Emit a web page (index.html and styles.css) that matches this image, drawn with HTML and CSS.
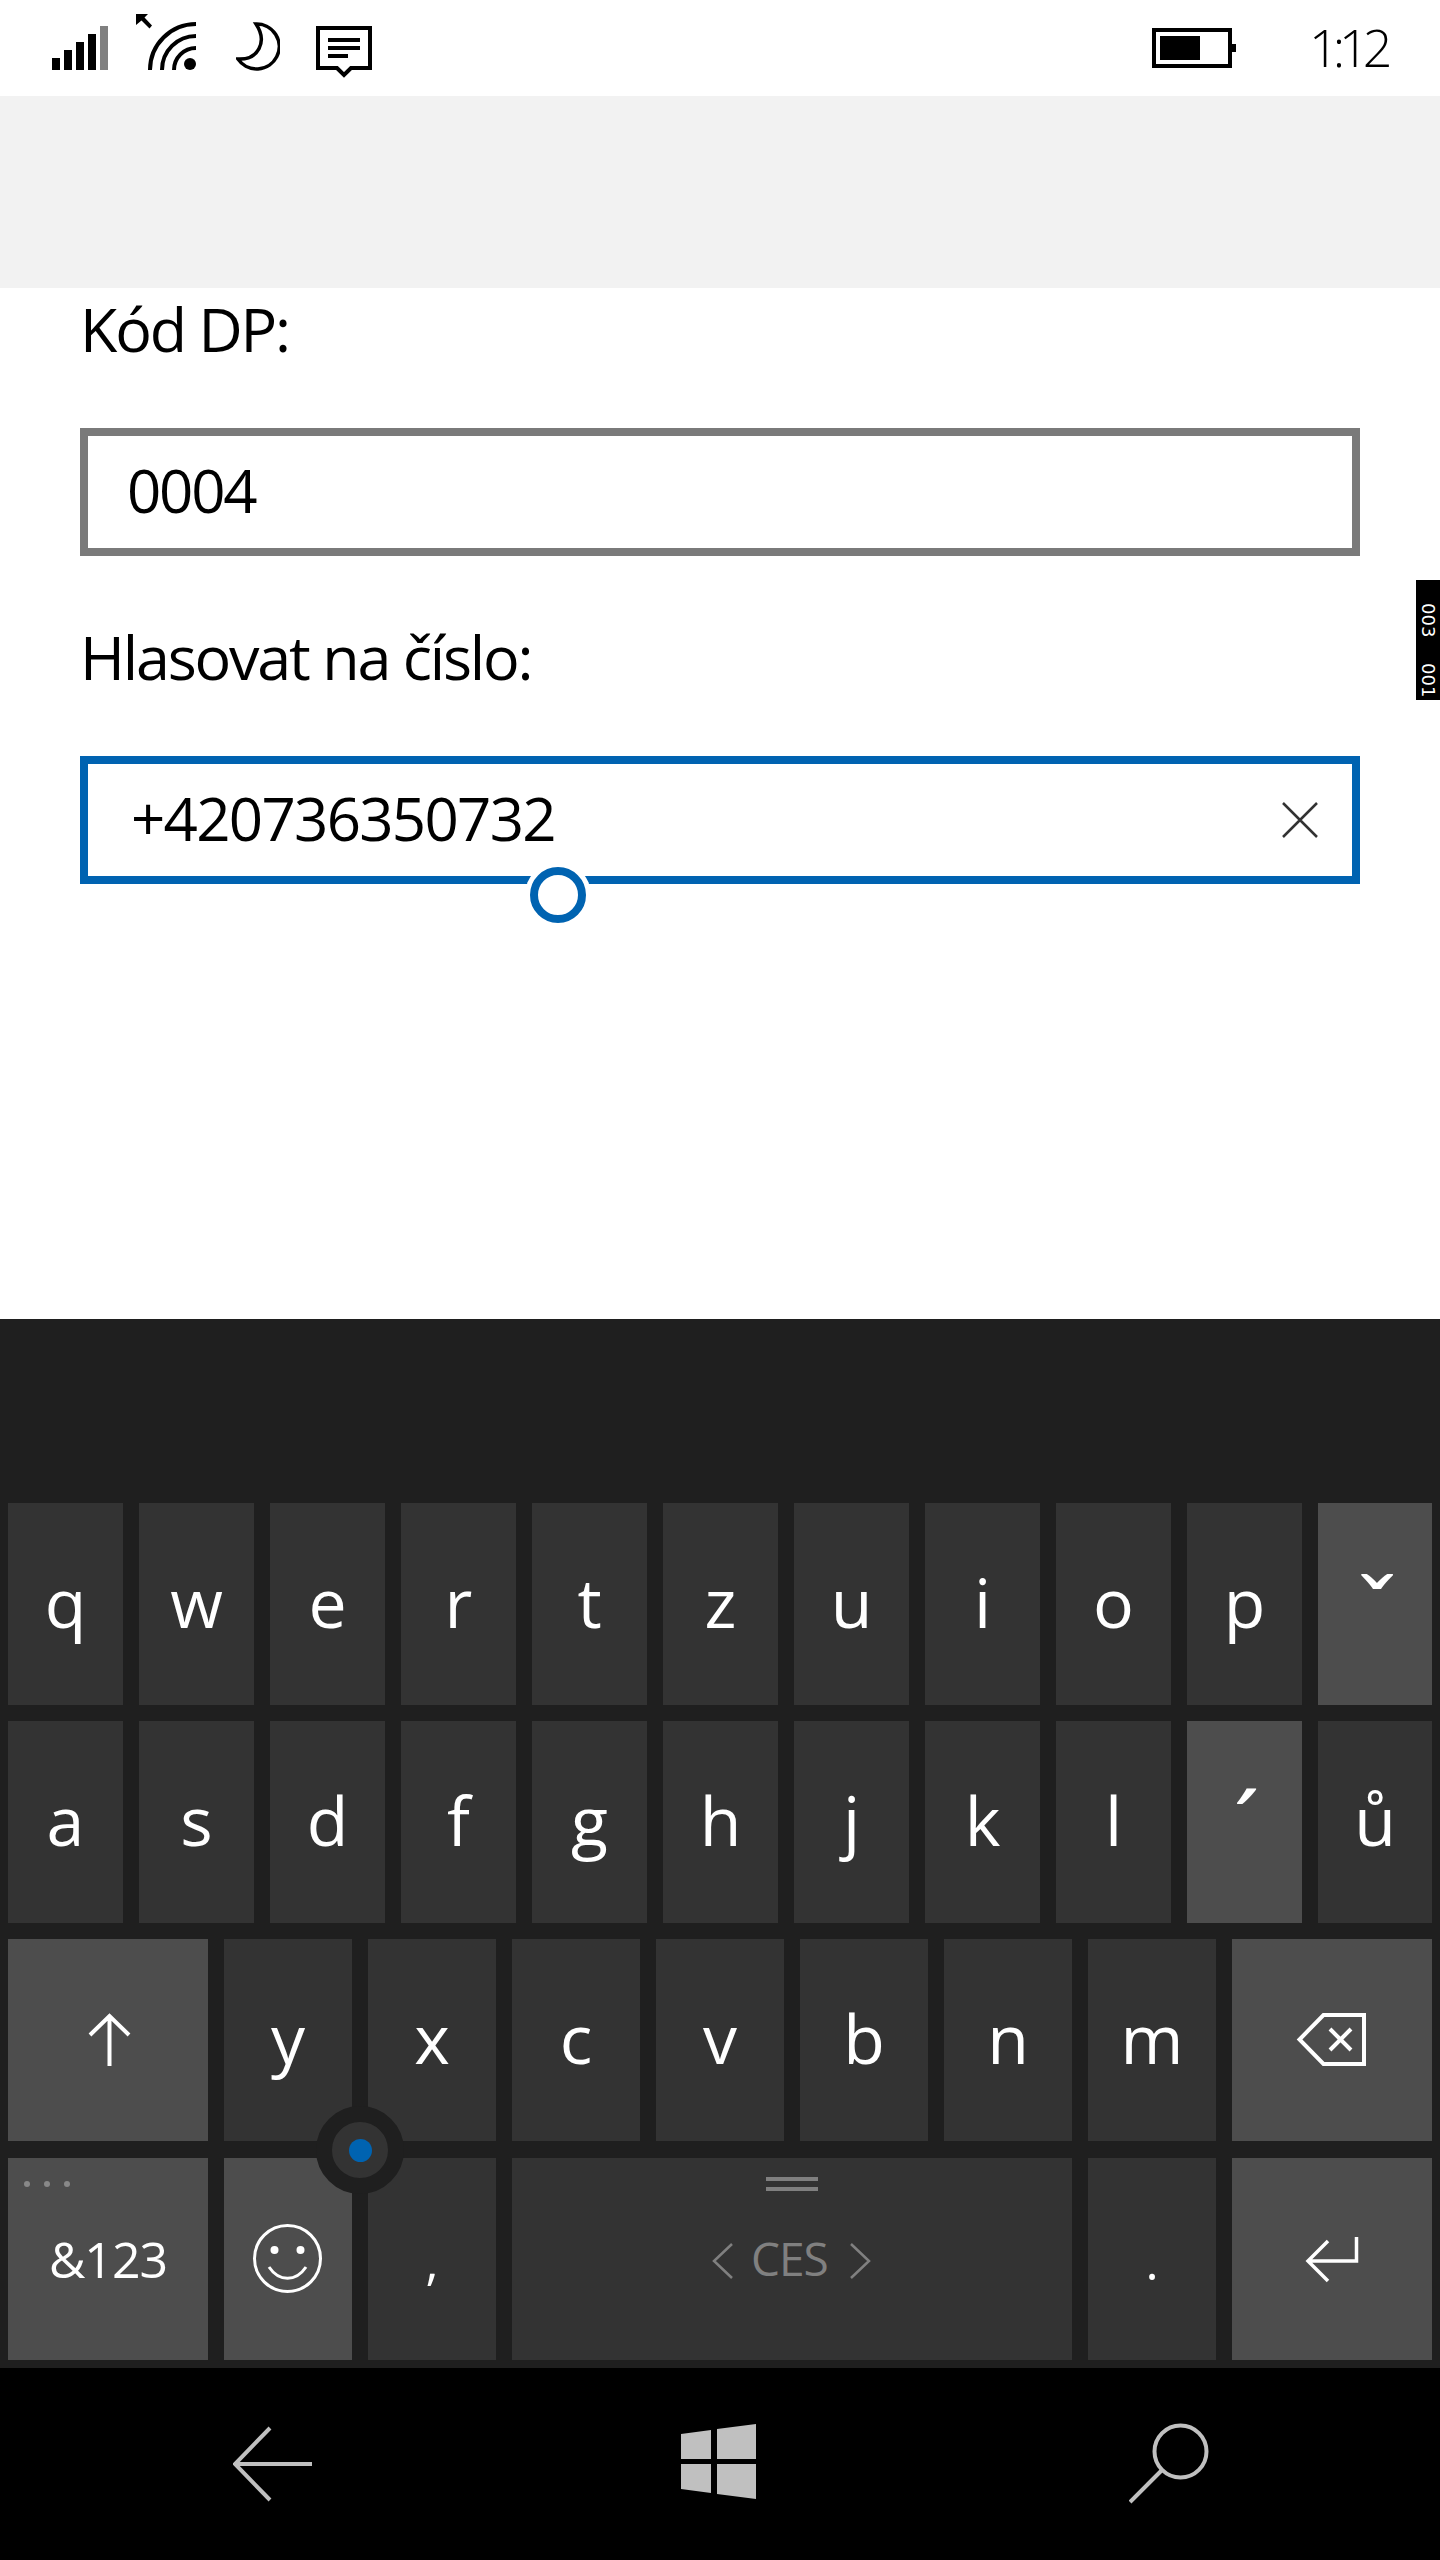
FILE: index.html
```html
<!DOCTYPE html>
<html lang="cs">
<head>
    <meta charset="UTF-8">
    <meta name="viewport" content="width=device-width, initial-scale=1.0">
    <title>Hlasovat</title>
    <link rel="stylesheet" href="styles.css">
</head>
<body>
    <!-- Status bar -->
    <header class="status-bar">
        <svg class="status-icon" width="56" height="96" viewBox="52 0 56 96">
            <rect x="52" y="58" width="8" height="12"/>
            <rect x="64" y="50" width="8" height="20"/>
            <rect x="76" y="42" width="8" height="28"/>
            <rect x="88" y="34" width="8" height="36"/>
            <rect x="100" y="26" width="8" height="44" fill="#808080"/>
        </svg>
        <svg class="status-icon gap-wifi" width="60" height="96" viewBox="136 0 60 96">
            <path d="M136 14H148L144.500 17.500L152 25.500L149.500 28.500L141.500 20.500L136 25Z"/>
            <circle cx="190" cy="64" r="6"/>
            <g fill="none" stroke="#000" stroke-width="4">
                <path d="M174 70A22 22 0 0 1 196 48"/>
                <path d="M162 70A34 34 0 0 1 196 36"/>
                <path d="M150 70A46 46 0 0 1 196 24"/>
            </g>
        </svg>
        <svg class="status-icon gap-moon" width="44" height="96" viewBox="236 0 44 96">
            <path d="M256 24A22.500 22.500 0 1 1 238 59C258 60 268 42 256 24Z" fill="none" stroke="#000" stroke-width="3.500"/>
        </svg>
        <svg class="status-icon gap-msg" width="56" height="96" viewBox="316 0 56 96">
            <path d="M318 28H370V68H351L344 75L337 68H318Z" fill="none" stroke="#000" stroke-width="4"/>
            <rect x="328" y="38" width="32" height="4"/>
            <rect x="328" y="46" width="32" height="4"/>
            <rect x="328" y="54" width="20" height="4"/>
        </svg>
        <svg class="status-icon battery" width="84" height="96" viewBox="1152 0 84 96">
            <rect x="1154" y="30" width="76" height="36" fill="none" stroke="#000" stroke-width="4"/>
            <rect x="1160" y="36" width="40" height="24"/>
            <rect x="1232" y="44" width="4" height="8"/>
        </svg>
        <span class="clock">1:12</span>
    </header>

    <div class="app-bar"></div>

    <main class="form">
        <label class="field-label">Kód DP:</label>
        <div class="field">0004</div>
        <label class="field-label">Hlasovat na číslo:</label>
        <div class="field field-focus">
            +420736350732
            <svg class="clear-btn" width="36" height="36" viewBox="0 0 36 36">
                <path d="M1 1L35 35M35 1L1 35" stroke="#333" stroke-width="2.500" fill="none"/>
            </svg>
            <span class="caret-handle"></span>
        </div>
    </main>

    <!-- Keyboard -->
    <section class="keyboard">
        <div class="key-row row-letters">
            <div class="key">q</div>
            <div class="key">w</div>
            <div class="key">e</div>
            <div class="key">r</div>
            <div class="key">t</div>
            <div class="key">z</div>
            <div class="key">u</div>
            <div class="key">i</div>
            <div class="key">o</div>
            <div class="key">p</div>
            <div class="key key-fn key-caron">ˇ</div>
        </div>
        <div class="key-row row-letters">
            <div class="key">a</div>
            <div class="key">s</div>
            <div class="key">d</div>
            <div class="key">f</div>
            <div class="key">g</div>
            <div class="key">h</div>
            <div class="key">j</div>
            <div class="key">k</div>
            <div class="key">l</div>
            <div class="key key-fn key-acute">´</div>
            <div class="key">ů</div>
        </div>
        <div class="key-row row-wide">
            <div class="key key-fn">
                <svg viewBox="8 1939 200 202">
                    <path d="M109.500 2066V2016M90 2035L109.500 2016L129 2035" fill="none" stroke="#fff" stroke-width="4"/>
                </svg>
            </div>
            <div class="key">y</div>
            <div class="key">x</div>
            <div class="key">c</div>
            <div class="key">v</div>
            <div class="key">b</div>
            <div class="key">n</div>
            <div class="key">m</div>
            <div class="key key-fn">
                <svg viewBox="1232 1939 200 202">
                    <path d="M1364 2015V2064H1323.500L1299.500 2039.500L1323.500 2015Z" fill="none" stroke="#fff" stroke-width="4"/>
                    <path d="M1330 2029L1351 2050M1351 2029L1330 2050" fill="none" stroke="#fff" stroke-width="4"/>
                </svg>
            </div>
        </div>
        <div class="key-row row-wide row-last">
            <div class="key key-fn key-sym">
                <span class="more-dots"><i></i><i></i><i></i></span>
                &amp;123
            </div>
            <div class="key key-fn">
                <svg viewBox="224 2158 128 202">
                    <circle cx="287.500" cy="2258.500" r="33" fill="none" stroke="#fff" stroke-width="3"/>
                    <circle cx="274.500" cy="2250" r="4" fill="#fff"/>
                    <circle cx="300.500" cy="2250" r="4" fill="#fff"/>
                    <path d="M269 2267C279 2282 296 2282 306 2267" fill="none" stroke="#fff" stroke-width="3"/>
                </svg>
            </div>
            <div class="key key-punct">,</div>
            <div class="key key-space">
                <svg viewBox="512 2158 560 202">
                    <rect x="766" y="2177" width="52" height="4" fill="#808080"/>
                    <rect x="766" y="2187" width="52" height="4" fill="#808080"/>
                    <path d="M732 2244L714 2261L732 2278M851 2244L869 2261L851 2278" fill="none" stroke="#808080" stroke-width="2.500"/>
                </svg>
                <span class="lang">CES</span>
            </div>
            <div class="key key-punct">.</div>
            <div class="key key-fn">
                <svg viewBox="1232 2158 200 202">
                    <path d="M1356.500 2237V2261H1308M1328 2241L1308 2261L1328 2281" fill="none" stroke="#fff" stroke-width="3.500"/>
                </svg>
            </div>
        </div>
        <div class="split-handle"><span></span></div>
    </section>

    <!-- Navigation bar -->
    <footer class="nav-bar">
        <svg width="80" height="192" viewBox="233 2368 80 192">
            <path d="M270 2428L235 2464L270 2500M235 2464H312" fill="none" stroke="#c0c0c0" stroke-width="4"/>
        </svg>
        <svg class="nav-start" width="75" height="192" viewBox="680 2368 75 192">
            <path d="M680 2434L710 2430V2459H680ZM716 2429L755 2424V2459H716ZM680 2464H710V2493L680 2489ZM716 2464H755V2499L716 2494Z" fill="#c0c0c0"/>
        </svg>
        <svg width="80" height="192" viewBox="1129 2368 80 192">
            <circle cx="1180.500" cy="2451.500" r="26" fill="none" stroke="#c0c0c0" stroke-width="4"/>
            <path d="M1162 2470L1130 2502" fill="none" stroke="#c0c0c0" stroke-width="4"/>
        </svg>
    </footer>

    <div class="debug-tag"><span>003</span><span>001</span></div>
</body>
</html>
```

FILE: styles.css
```css
* {
    box-sizing: border-box;
}
body {
    position: relative;
    margin: 0;
    width: 1440px;
    height: 2560px;
    overflow: hidden;
    font-family: "Open Sans", "Noto Sans", sans-serif;
    background-color: #fff;
    color: #000;
}
.status-bar {
    display: flex;
    height: 96px;
    padding-left: 52px;
}
.status-icon {
    display: block;
}
.gap-wifi {
    margin-left: 28px;
}
.gap-moon {
    margin-left: 40px;
}
.gap-msg {
    margin-left: 36px;
}
.battery {
    margin-left: 780px;
}
.clock {
    margin-left: 73px;
    font-size: 52px;
    font-weight: 300;
    line-height: 94px;
    letter-spacing: -6px;
}
.app-bar {
    height: 192px;
    background-color: #f2f2f2;
}
.form {
    height: 1031px;
    padding: 0 80px;
}
.field-label {
    display: block;
    font-size: 61px;
    line-height: 82px;
    letter-spacing: -2.200px;
    margin-bottom: 58px;
}
.field {
    position: relative;
    display: flex;
    align-items: center;
    justify-content: space-between;
    height: 128px;
    padding: 0 34px 4px 39px;
    margin-bottom: 60px;
    border: 8px solid #7a7a7a;
    font-size: 60px;
    letter-spacing: -2.200px;
}
.field-focus {
    border-color: #0063b1;
    padding-left: 43px;
    letter-spacing: -1.700px;
}
.clear-btn {
    display: block;
    margin-top: 4px;
}
.caret-handle {
    position: absolute;
    left: 442px;
    top: 103px;
    width: 56px;
    height: 56px;
    border: 8px solid #0063b1;
    border-radius: 50%;
    background-color: #fff;
    box-shadow: 0 0 0 5px #fff;
}
.keyboard {
    position: relative;
    height: 1049px;
    padding: 184px 8px 8px;
    background-color: #1f1f1f;
}
.key-row {
    display: grid;
    gap: 16px;
    height: 202px;
    margin-bottom: 16px;
}
.row-letters {
    grid-template-columns: repeat(10, 115px) 1fr;
}
.row-wide {
    grid-template-columns: 200px repeat(7, 1fr) 200px;
}
.row-last {
    margin-top: 17px;
    margin-bottom: 0;
}
.key {
    position: relative;
    display: flex;
    align-items: center;
    justify-content: center;
    padding-bottom: 6px;
    background-color: #333;
    color: #fff;
    font-size: 68px;
}
.key svg {
    position: absolute;
    left: 0;
    top: 0;
    display: block;
    width: 100%;
    height: 100%;
}
.key-fn {
    background-color: #4d4d4d;
}
.key-caron {
    padding: 12px 0 0 4px;
    font-size: 96px;
    line-height: 1;
}
.key-acute {
    padding: 6px 0 0 4px;
    font-size: 96px;
    line-height: 1;
}
.key-sym {
    padding-bottom: 0;
    font-size: 50px;
    letter-spacing: -1px;
}
.key-punct {
    padding-bottom: 0;
    padding-top: 4px;
    font-size: 50px;
}
.key-space {
    grid-column: span 4;
}
.lang {
    position: absolute;
    left: 239px;
    top: 70px;
    font-size: 46px;
    line-height: 60px;
    letter-spacing: -1px;
    color: #808080;
}
.more-dots {
    position: absolute;
    left: 16px;
    top: 23px;
    display: flex;
    gap: 14px;
}
.more-dots i {
    width: 6px;
    height: 6px;
    border-radius: 50%;
    background-color: #888;
}
.split-handle {
    position: absolute;
    left: 316px;
    top: 787px;
    width: 88px;
    height: 88px;
    display: flex;
    align-items: center;
    justify-content: center;
    border: 16px solid #1f1f1f;
    border-radius: 50%;
    background-color: #333;
}
.split-handle span {
    width: 23px;
    height: 23px;
    border-radius: 50%;
    background-color: #0063b1;
}
.nav-bar {
    display: flex;
    justify-content: space-between;
    height: 192px;
    padding: 0 231px 0 233px;
    background-color: #000;
}
.nav-bar svg {
    display: block;
}
.nav-start {
    margin-right: 6px;
}
.debug-tag {
    position: absolute;
    left: 1416px;
    top: 580px;
    display: flex;
    align-items: center;
    gap: 26px;
    width: 24px;
    height: 120px;
    padding-top: 23px;
    background-color: #000;
    color: #fff;
    font-family: "DejaVu Sans", sans-serif;
    font-size: 18px;
    line-height: 24px;
    writing-mode: vertical-rl;
}
```
